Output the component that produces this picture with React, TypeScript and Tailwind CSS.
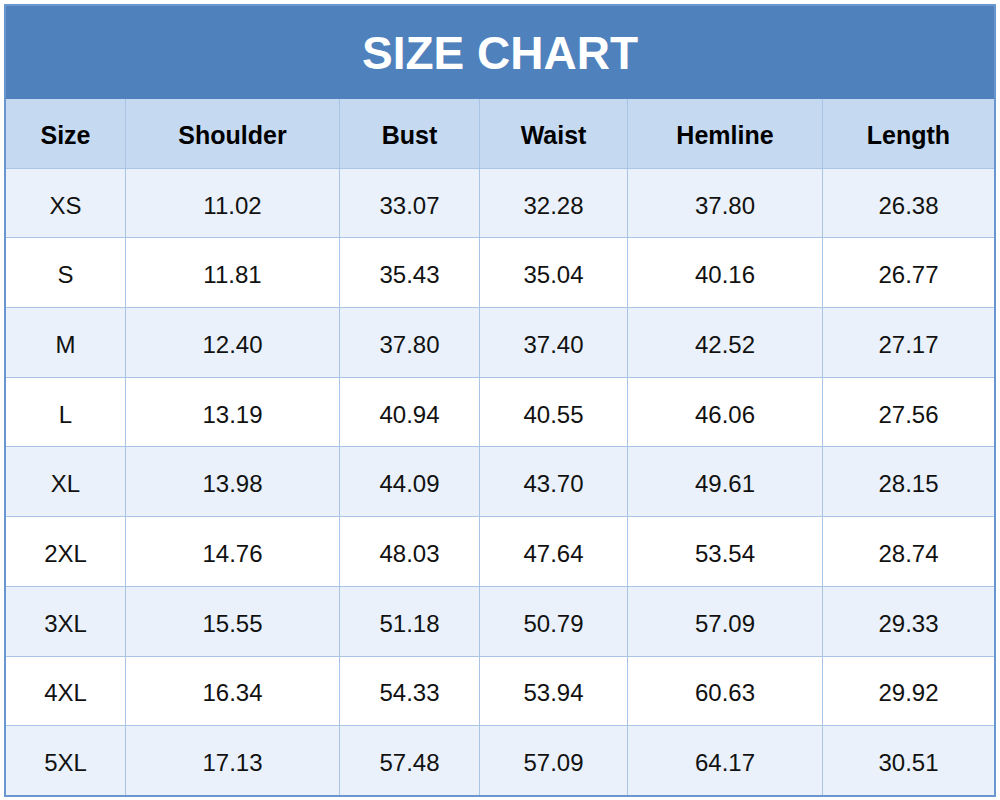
import React from 'react';

const HEADERS = ['Size', 'Shoulder', 'Bust', 'Waist', 'Hemline', 'Length'];

const ROWS: string[][] = [
    ['XS', '11.02', '33.07', '32.28', '37.80', '26.38'],
    ['S', '11.81', '35.43', '35.04', '40.16', '26.77'],
    ['M', '12.40', '37.80', '37.40', '42.52', '27.17'],
    ['L', '13.19', '40.94', '40.55', '46.06', '27.56'],
    ['XL', '13.98', '44.09', '43.70', '49.61', '28.15'],
    ['2XL', '14.76', '48.03', '47.64', '53.54', '28.74'],
    ['3XL', '15.55', '51.18', '50.79', '57.09', '29.33'],
    ['4XL', '16.34', '54.33', '53.94', '60.63', '29.92'],
    ['5XL', '17.13', '57.48', '57.09', '64.17', '30.51'],
];

const App: React.FC = () => {
    return (
        <div className="w-[1000px] h-[800px] bg-white pt-[4px] pl-[4px]" style={{ fontFamily: '"Liberation Sans", Arial, sans-serif' }}>
            <div className="w-[992px] border-2 border-[#6a96cf] bg-[#a9c4e4]">
                <div className="h-[93px] bg-[#4f81bd] flex items-center justify-center border-b border-[#4f81bd]">
                    <h1 className="text-white font-bold text-[46px] leading-none pt-[2px]">SIZE CHART</h1>
                </div>

                <div className="grid grid-cols-[119px_213px_139px_147px_194px_1fr] grid-rows-10 h-[696px] gap-px">
                    {HEADERS.map(h => (
                        <div key={h} className="bg-[#c5d9f1] flex items-center justify-center pt-[4px] text-[25px] font-bold text-black">
                            {h}
                        </div>
                    ))}
                    {ROWS.map((row, i) =>
                        row.map((cell, j) => (
                            <div
                                key={`${i}-${j}`}
                                className={`flex items-center justify-center pt-[5px] text-[24px] text-[#111] ${i % 2 === 0 ? 'bg-[#eaf1fa]' : 'bg-white'}`}
                            >
                                {cell}
                            </div>
                        ))
                    )}
                </div>
            </div>
        </div>
    );
};

export default App;
